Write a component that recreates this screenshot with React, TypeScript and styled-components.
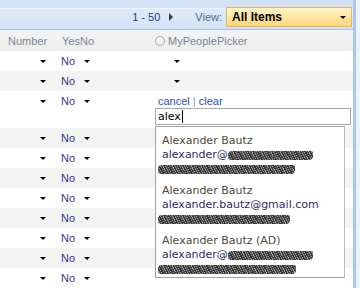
import { createGlobalStyle } from "styled-components";
import styled from "styled-components";

const GlobalStyle = createGlobalStyle`
  html, body {
    margin: 0;
    padding: 0;
    background: #ffffff;
    overflow: hidden;
  }
`;

const Frame = styled.div`
  display: flex;
  width: 360px;
  height: 288px;
  overflow: hidden;
`;

const Main = styled.div`
  flex: 1;
  display: flex;
  flex-direction: column;
  min-width: 0;
`;

const RightEdge = styled.div`
  width: 4px;
  border-left: 3px solid #a9c6ee;
  background: #eef3fb;
`;

const Toolbar = styled.div`
  display: flex;
  align-items: flex-start;
  justify-content: flex-end;
  height: 30px;
  padding-top: 7px;
  box-sizing: border-box;
  border-bottom: 1px solid #a3c1e8;
  background: linear-gradient(
    #d4e2f5 0,
    #d4e2f5 8px,
    #eef4fc 8px,
    #eef4fc 9px,
    #dfeaf9 9px,
    #d3e2f6 30px
  );
  font-family: "Liberation Sans", Arial, sans-serif;
  font-size: 11px;
`;

const Paging = styled.span`
  color: #1f3f8c;
  line-height: 20px;
`;

const NextArrow = styled.span`
  width: 0;
  height: 0;
  margin: 6px 22px 0 9px;
  border-top: 4px solid transparent;
  border-bottom: 4px solid transparent;
  border-left: 4px solid #3a3a3a;
`;

const ViewLabel = styled.span`
  color: #4d6b93;
  line-height: 20px;
  margin-right: 4px;
`;

const ViewSelect = styled.div`
  display: flex;
  align-items: center;
  justify-content: space-between;
  width: 126px;
  height: 20px;
  box-sizing: border-box;
  margin-right: 1px;
  padding: 0 5px 0 5px;
  border: 1px solid #e6b65c;
  background: linear-gradient(#fff3cb, #fde39a 60%, #fcd679);
  font-size: 12px;
  font-weight: bold;
  color: #000;
`;

const DownArrow = styled.span<{ $size?: number }>`
  display: inline-block;
  width: 0;
  height: 0;
  border-left: ${(p) => p.$size ?? 3}px solid transparent;
  border-right: ${(p) => p.$size ?? 3}px solid transparent;
  border-top: ${(p) => p.$size ?? 3}px solid #000;
`;

const Grid = styled.div`
  display: grid;
  grid-template-columns: 55px 95px 1fr;
`;

const Header = styled(Grid)`
  height: 22px;
  align-items: center;
  background: linear-gradient(#f3f3f3, #eeeeee);
  font-family: "Liberation Sans", Arial, sans-serif;
  font-size: 11px;
  color: #7b8696;
`;

const HeadCell = styled.div<{ $pad: number }>`
  display: flex;
  align-items: center;
  gap: 3px;
  padding-left: ${(p) => p.$pad}px;
`;

const Radio = styled.span`
  width: 10px;
  height: 10px;
  box-sizing: border-box;
  border-radius: 50%;
  border: 1px solid #a7adb5;
  background: radial-gradient(circle at 40% 35%, #ffffff, #dfe2e6);
`;

const Row = styled(Grid)<{ $alt: boolean }>`
  min-height: 20px;
  box-sizing: border-box;
  padding: 3px 0 3px;
  align-items: start;
  background: ${(p) => (p.$alt ? "#f3f3f3" : "#ffffff")};
  font-family: "Liberation Sans", Arial, sans-serif;
  font-size: 11px;
  line-height: 14px;
  color: #35358a;
`;

const NumberCell = styled.div`
  display: flex;
  justify-content: flex-end;
  align-items: center;
  height: 14px;
  padding-right: 9px;
`;

const YesNoCell = styled.div`
  display: flex;
  align-items: center;
  gap: 9px;
  height: 14px;
  padding-left: 6px;
`;

const PickerCell = styled.div<{ $editing?: boolean }>`
  display: flex;
  flex-direction: column;
  padding-left: ${(p) => (p.$editing ? 5 : 24)}px;
  padding-right: 2px;
  min-height: 14px;
  justify-content: center;
`;

const ArrowHolder = styled.div`
  display: flex;
  align-items: center;
  height: 14px;
`;

const Actions = styled.div`
  padding-left: 3px;
  color: #2553b5;
`;

const Pipe = styled.span`
  color: #7a97d6;
`;

const InputWrap = styled.div`
  position: relative;
`;

const TextBox = styled.div`
  display: flex;
  align-items: center;
  height: 17px;
  box-sizing: border-box;
  padding-left: 2px;
  border: 1px solid #a4a9b0;
  font-family: "DejaVu Sans", Verdana, sans-serif;
  font-size: 11px;
  color: #000;
`;

const Caret = styled.span`
  width: 1px;
  height: 13px;
  margin-left: 1px;
  background: #000;
`;

const Suggestions = styled.div`
  position: absolute;
  top: calc(100% + 1px);
  left: 0;
  z-index: 2;
  width: 190px;
  height: 152px;
  box-sizing: border-box;
  padding: 7px 0 0 6px;
  border: 1px solid #a2a2a2;
  border-right-color: #b8b8b8;
  background: #ffffff;
  display: flex;
  flex-direction: column;
  gap: 8px;
  font-family: "DejaVu Sans", Verdana, sans-serif;
  font-size: 11px;
  line-height: 14px;
`;

const Suggestion = styled.div`
  display: flex;
  flex-direction: column;
`;

const Name = styled.div`
  color: #4f4838;
  white-space: nowrap;
`;

const Email = styled.div`
  display: flex;
  align-items: center;
  color: #2f2b66;
  white-space: nowrap;
`;

const Redacted = styled.span<{ $w: number; $shift?: number }>`
  display: inline-block;
  width: ${(p) => p.$w}px;
  height: 9px;
  margin-left: ${(p) => p.$shift ?? 0}px;
  border-radius: 4px 2px 4px 3px;
  background: repeating-linear-gradient(
      62deg,
      #262626 0 1.5px,
      #7a7a7a 1.5px 2.2px,
      #3a3a3a 2.2px 3.6px,
      #9a9a9a 3.6px 4.2px
    ),
    #3a3a3a;
  filter: blur(0.7px);
  opacity: 0.92;
`;

const RedactLine = styled.div`
  display: flex;
  align-items: center;
  height: 14px;
`;

type Person = { name: string; email: string; hideEmail: boolean; tail: number };

const people: Person[] = [
  { name: "Alexander Bautz", email: "alexander@", hideEmail: true, tail: 137 },
  { name: "Alexander Bautz", email: "alexander.bautz@gmail.com", hideEmail: false, tail: 132 },
  { name: "Alexander Bautz (AD)", email: "alexander@", hideEmail: true, tail: 138 },
];

const rowCount = 11;

export default function App() {
  return (
    <>
      <GlobalStyle />
      <Frame>
        <Main>
          <Toolbar>
            <Paging>1 - 50</Paging>
            <NextArrow />
            <ViewLabel>View:</ViewLabel>
            <ViewSelect>
              All Items
              <DownArrow />
            </ViewSelect>
          </Toolbar>

          <Header>
            <HeadCell $pad={8}>Number</HeadCell>
            <HeadCell $pad={7}>YesNo</HeadCell>
            <HeadCell $pad={5}>
              <Radio />
              MyPeoplePicker
            </HeadCell>
          </Header>

          {Array.from({ length: rowCount }).map((_, i) => (
            <Row key={i} $alt={i % 2 === 1}>
              <NumberCell>
                <DownArrow />
              </NumberCell>
              <YesNoCell>
                No
                <DownArrow />
              </YesNoCell>
              {i === 2 ? (
                <PickerCell $editing>
                  <Actions>
                    cancel <Pipe>|</Pipe> clear
                  </Actions>
                  <InputWrap>
                    <TextBox>
                      alex
                      <Caret />
                    </TextBox>
                    <Suggestions>
                      {people.map((p, k) => (
                        <Suggestion key={k}>
                          <Name>{p.name}</Name>
                          <Email>
                            {p.email}
                            {p.hideEmail && <Redacted $w={85} />}
                          </Email>
                          <RedactLine>
                            <Redacted $w={p.tail} $shift={-4} />
                          </RedactLine>
                        </Suggestion>
                      ))}
                    </Suggestions>
                  </InputWrap>
                </PickerCell>
              ) : (
                <PickerCell>
                  {i < 2 && (
                    <ArrowHolder>
                      <DownArrow />
                    </ArrowHolder>
                  )}
                </PickerCell>
              )}
            </Row>
          ))}
        </Main>
        <RightEdge />
      </Frame>
    </>
  );
}
